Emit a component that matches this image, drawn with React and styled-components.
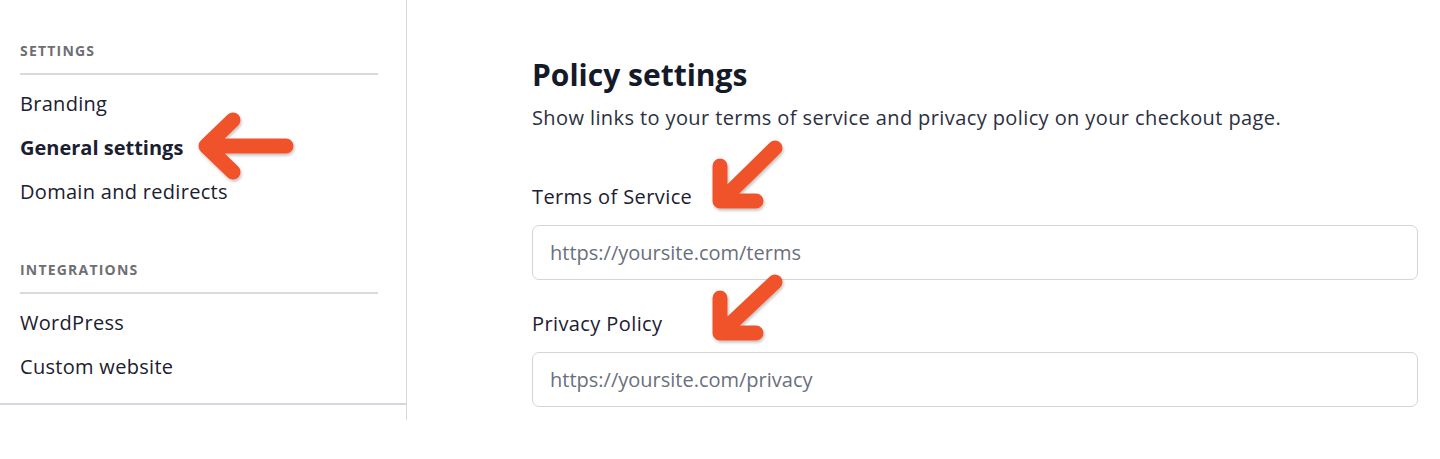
import React from "react";
import styled, { createGlobalStyle } from "styled-components";

const Global = createGlobalStyle`
  html, body { margin: 0; padding: 0; background: #ffffff; }
  body { font-family: "Open Sans", "Lato", sans-serif; color: #1b2030; }
  * { box-sizing: border-box; }
`;

const Page = styled.div`
  position: relative;
  width: 1440px;
  height: 459px;
  display: flex;
  align-items: flex-start;
  overflow: hidden;
`;

const Sidebar = styled.aside`
  width: 407px;
  height: 420px;
  border-right: 1px solid #d6d7de;
  flex-shrink: 0;
`;

const SideNav = styled.nav`
  height: 405px;
  border-bottom: 2px solid #d6d7de;
  padding: 42px 28px 0 20px;
`;

const Section = styled.div`
  margin-bottom: ${(p) => p.$gap || 0}px;
`;

const SectionTitle = styled.div`
  font-size: 14px;
  font-weight: 700;
  letter-spacing: 1.2px;
  color: #6e6e73;
  text-transform: uppercase;
  line-height: 18px;
  padding-bottom: 13px;
  border-bottom: 2px solid #d9dae0;
`;

const NavList = styled.ul`
  list-style: none;
  margin: 0;
  padding: 17px 0 0;
  display: flex;
  flex-direction: column;
  gap: 20px;
`;

const NavItem = styled.li`
  font-size: 20px;
  line-height: 24px;
  color: #1b2030;
  letter-spacing: ${(p) => (p.$active ? 0 : 0.3)}px;
  font-weight: ${(p) => (p.$active ? 700 : 400)};
`;

const Main = styled.main`
  flex: 1;
  padding: 57px 22px 0 125px;
`;

const Heading = styled.h1`
  margin: 0;
  font-size: 30px;
  line-height: 36px;
  font-weight: 700;
  color: #151a2b;
`;

const Description = styled.p`
  margin: 12px 0 0;
  font-size: 20px;
  line-height: 26px;
  letter-spacing: 0.4px;
  color: #2b3040;
`;

const Field = styled.div`
  margin-top: ${(p) => p.$top}px;
  display: flex;
  flex-direction: column;
  gap: 16px;
`;

const Label = styled.label`
  font-size: 20px;
  line-height: 24px;
  letter-spacing: 0.4px;
  color: #1b2030;
`;

const Input = styled.input`
  width: 100%;
  height: 55px;
  border: 1.5px solid #d3d5dc;
  border-radius: 7px;
  padding: 0 17px;
  font-family: inherit;
  font-size: 20px;
  letter-spacing: 0;
  color: #1b2030;
  background: #fff;
  outline: none;
  &::placeholder { color: #6a6f7d; }
`;

const Arrow = styled.svg`
  position: absolute;
  left: 0;
  top: 0;
  pointer-events: none;
  overflow: visible;
`;

export default function App() {
  return (
    <>
      <Global />
      <Page>
        <Sidebar>
          <SideNav>
            <Section $gap={57}>
              <SectionTitle>Settings</SectionTitle>
              <NavList>
                <NavItem>Branding</NavItem>
                <NavItem $active>General settings</NavItem>
                <NavItem>Domain and redirects</NavItem>
              </NavList>
            </Section>
            <Section>
              <SectionTitle>Integrations</SectionTitle>
              <NavList>
                <NavItem>WordPress</NavItem>
                <NavItem>Custom website</NavItem>
              </NavList>
            </Section>
          </SideNav>
        </Sidebar>
        <Main>
          <Heading>Policy settings</Heading>
          <Description>
            Show links to your terms of service and privacy policy on your checkout page.
          </Description>
          <Field $top={54}>
            <Label>Terms of Service</Label>
            <Input placeholder="https://yoursite.com/terms" />
          </Field>
          <Field $top={32}>
            <Label>Privacy Policy</Label>
            <Input placeholder="https://yoursite.com/privacy" />
          </Field>
        </Main>
        <Arrow width="1440" height="459" viewBox="0 0 1440 459">
          <defs>
            <filter id="sh" x="-20%" y="-20%" width="140%" height="140%">
              <feDropShadow dx="1" dy="2" stdDeviation="1.5" floodColor="#000" floodOpacity="0.25" />
            </filter>
          </defs>
          <g
            fill="none"
            stroke="#f0522c"
            strokeWidth="15"
            strokeLinecap="round"
            strokeLinejoin="round"
            filter="url(#sh)"
          >
            <path d="M286 146 L206 146 M233 120 L206 146 L233 172" />
            <path d="M775 148 L722 200 M720 166 L720 201 L756 201" />
            <path d="M775 282 L722 332 M720 298 L720 333 L756 333" />
          </g>
        </Arrow>
      </Page>
    </>
  );
}
